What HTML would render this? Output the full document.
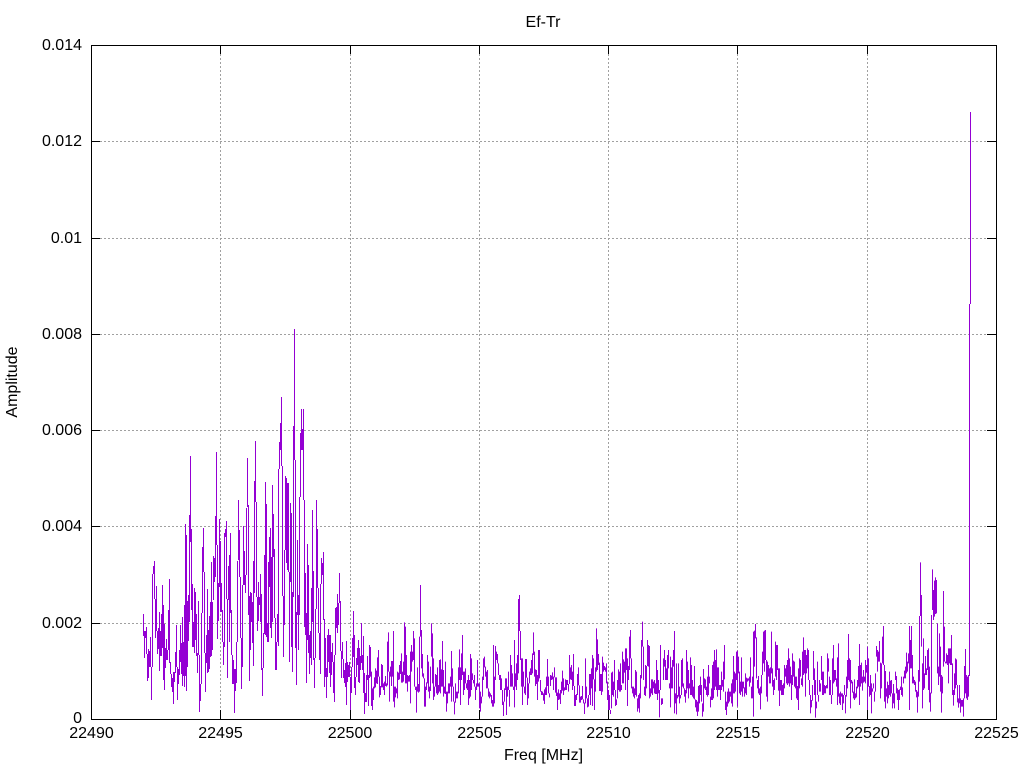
<!DOCTYPE html>
<html><head><meta charset="utf-8"><title>Ef-Tr</title>
<style>html,body{margin:0;padding:0;background:#fff}svg{display:block}text{font-family:"Liberation Sans",sans-serif;font-size:16px;fill:#000}</style>
</head><body>
<svg width="1024" height="768" viewBox="0 0 1024 768" xmlns="http://www.w3.org/2000/svg">
<rect width="1024" height="768" fill="#fff"/>
<g fill="none" stroke="#a0a0a0" stroke-width="1" stroke-dasharray="2 2" shape-rendering="crispEdges">
<path d="M100 141.5H987M100 238.5H987M100 334.5H987M100 430.5H987M100 526.5H987M100 623.5H987"/>
<path d="M220.5 54V710M350.5 54V710M479.5 54V710M608.5 54V710M737.5 54V710M867.5 54V710"/>
</g>
<g fill="none" stroke="#9400d3" stroke-width="1" shape-rendering="crispEdges">
<path d="M143.5 614V636M144.5 631V658M145.5 631V638M146.5 627V654M147.5 654V681M148.5 649V678M149.5 651V667M150.5 637V667M151.5 667V700M152.5 574V667M153.5 566V574M154.5 561V599M155.5 599V638M156.5 586V631M157.5 631V654M158.5 628V649M159.5 612V671M160.5 631V656M161.5 614V656M162.5 585V648M163.5 605V680M164.5 624V690M165.5 648V668M166.5 639V660M167.5 650V660M168.5 610V650M169.5 579V663M170.5 662V674M171.5 674V687M172.5 678V692M173.5 672V704M174.5 672V682M175.5 652V673M176.5 625V667M177.5 667V700M178.5 669V684M179.5 650V675M180.5 625V662M181.5 643V674M182.5 617V686M183.5 642V676M184.5 605V687M185.5 524V676M186.5 535V691M187.5 601V667M188.5 595V641M189.5 515V622M190.5 456V542M191.5 529V610M192.5 584V647M193.5 622V647M194.5 588V653M195.5 592V640M196.5 614V656M197.5 653V673M198.5 601V655M199.5 655V712M200.5 684V701M201.5 613V684M202.5 547V613M203.5 528V572M204.5 572V653M205.5 653V692M206.5 635V663M207.5 589V673M208.5 630V672M209.5 616V669M210.5 602V657M211.5 562V656M212.5 602V650M213.5 556V600M214.5 558V582M215.5 516V577M216.5 452V545M217.5 545V639M218.5 583V621M219.5 519V587M220.5 541V612M221.5 583V612M222.5 610V642M223.5 642V665M224.5 533V647M225.5 529V537M226.5 521V599M227.5 599V678M228.5 566V600M229.5 555V642M230.5 533V613M231.5 610V655M232.5 655V684M233.5 660V684M234.5 669V713M235.5 669V691M236.5 642V683M237.5 561V642M238.5 500V560M239.5 530V577M240.5 577V638M241.5 638V689M242.5 585V667M243.5 526V585M244.5 551V585M245.5 575V593M246.5 508V575M247.5 458V507M248.5 505V615M249.5 596V681"/>
<path d="M250.5 592V650M251.5 593V622M252.5 602V643M253.5 561V666M254.5 481V593M255.5 441V502M256.5 502V597M257.5 597V631M258.5 582V621M259.5 597V605M260.5 574V622M261.5 594V670M262.5 668V696M263.5 633V668M264.5 555V634M265.5 482V635M266.5 504V637M267.5 623V642M268.5 562V642M269.5 537V587M270.5 528V628M271.5 557V638M272.5 485V622M273.5 514V557M274.5 549V618M275.5 618V670M276.5 642V670M277.5 614V642M278.5 469V646M279.5 442V469M280.5 423V450M281.5 397V466M282.5 466V596M283.5 596V657M284.5 550V625M285.5 476V550M286.5 478V563M287.5 483V570M288.5 483V572M289.5 572V662M290.5 503V582M291.5 513V647M292.5 592V672M293.5 426V597M294.5 329V460M295.5 460V648M296.5 612V685M297.5 540V615M298.5 595V650M299.5 497V615M300.5 433V497M301.5 409V450M302.5 429V450M303.5 409V500M304.5 500V627M305.5 573V635M306.5 613V683M307.5 544V640M308.5 565V653M309.5 635V674M310.5 631V658M311.5 588V665M312.5 510V622M313.5 571V660M314.5 658V688M315.5 609V658M316.5 500V609M317.5 529V588M318.5 588V633M319.5 633V660M320.5 584V674M321.5 558V584M322.5 563V575M323.5 552V620M324.5 619V687M325.5 638V677M326.5 668V698M327.5 635V677M328.5 629V662M329.5 635V673M330.5 635V687M331.5 652V675M332.5 643V662M333.5 662V693M334.5 655V702M335.5 608V655M336.5 607V628M337.5 594V633M338.5 603V625M339.5 573V603M340.5 601V651M341.5 651V678M342.5 642V659M343.5 659V678M344.5 670V683M345.5 663V687M346.5 641V705M347.5 662V682M348.5 665V677M349.5 662V677M350.5 677V711M351.5 667V693M352.5 638V667M353.5 611V657M354.5 635V688M355.5 677V695M356.5 658V677M357.5 648V665M358.5 640V682M359.5 648V683M360.5 656V670M361.5 623V663M362.5 655V670M363.5 636V693M364.5 673V714M365.5 693V702M366.5 675V702M367.5 656V680M368.5 675V706M369.5 645V678"/>
</g>
<g transform="translate(0,580) scale(1,0.33333)" fill="none" stroke="#9400d3" stroke-width="1" shape-rendering="crispEdges">
<path d="M370.5 201V290M371.5 275V378M372.5 325V390M373.5 320V360M374.5 292V325M375.5 265V322M376.5 272V310M377.5 232V312M378.5 210V290M379.5 290V352M380.5 318V345M381.5 252V322M382.5 255V322M383.5 310V330M384.5 305V345M385.5 288V318M386.5 310V320M387.5 185V316M388.5 157V275M389.5 275V365M390.5 260V290M391.5 243V318M392.5 243V290M393.5 153V365M394.5 320V382M395.5 320V352M396.5 325V340M397.5 275V355M398.5 278V300M399.5 255V298M400.5 243V282M401.5 220V308M402.5 275V308M403.5 245V305M404.5 127V285M405.5 140V310M406.5 225V310M407.5 285V335M408.5 288V305M409.5 285V305M410.5 215V370M411.5 195V275M412.5 215V245M413.5 153V240M414.5 175V320M415.5 320V330M416.5 320V398M417.5 262V335M418.5 312V338M419.5 170V335M420.5 15V170M421.5 150V265M422.5 222V290M423.5 280V295M424.5 295V380M425.5 320V380M426.5 307V330M427.5 225V310M428.5 245V335M429.5 320V355M430.5 260V333M431.5 130V230M432.5 160V310M433.5 235V360M434.5 320V350M435.5 282V320M436.5 285V340M437.5 262V345M438.5 315V340M439.5 240V335M440.5 238V340M441.5 268V320M442.5 183V320M443.5 270V350M444.5 320V340M445.5 245V342M446.5 335V395M447.5 335V370M448.5 310V340M449.5 310V340M450.5 290V320M451.5 213V365M452.5 265V320M453.5 320V365M454.5 365V403M455.5 310V368M456.5 335V355M457.5 335V355M458.5 262V340M459.5 208V300M460.5 262V375M461.5 220V300M462.5 165V285M463.5 275V345M464.5 275V330M465.5 265V310M466.5 310V325M467.5 300V330M468.5 285V375M469.5 300V355M470.5 222V350M471.5 235V330M472.5 280V300M473.5 300V310M474.5 285V320M475.5 320V360M476.5 310V330M477.5 240V320M478.5 310V320M479.5 310V385M480.5 335V395M481.5 350V370M482.5 290V350M483.5 235V300M484.5 230V262M485.5 260V290M486.5 275V325M487.5 270V325M488.5 325V350M489.5 335V355M490.5 340V350M491.5 345V370M492.5 360V380M493.5 195V380M494.5 290V370M495.5 198V300M496.5 215V240M497.5 222V250M498.5 250V285M499.5 285V300M500.5 285V330M501.5 295V330M502.5 330V375M503.5 365V408M504.5 325V365M505.5 295V330M506.5 295V405M507.5 320V350M508.5 275V330M509.5 330V380M510.5 225V320M511.5 255V320M512.5 280V320M513.5 320V330M514.5 180V382M515.5 280V320M516.5 250V330M517.5 225V300M518.5 57V280M519.5 45V153M520.5 153V240M521.5 235V320M522.5 235V375M523.5 275V320M524.5 320V340M525.5 237V345M526.5 237V293M527.5 293V375M528.5 310V355M529.5 275V310"/>
<path d="M530.5 265V285M531.5 240V285M532.5 220V280M533.5 157V225M534.5 215V290M535.5 268V318M536.5 270V312M537.5 285V360M538.5 210V305M539.5 210V295M540.5 300V335M541.5 333V345M542.5 335V345M543.5 340V362M544.5 328V372M545.5 322V345M546.5 290V345M547.5 237V318M548.5 290V340M549.5 340V352M550.5 285V318M551.5 287V300M552.5 277V298M553.5 290V330M554.5 262V292M555.5 292V338M556.5 292V348M557.5 338V390M558.5 328V360M559.5 340V358M560.5 330V372M561.5 305V340M562.5 272V332M563.5 295V345M564.5 322V332M565.5 298V330M566.5 300V330M567.5 300V315M568.5 312V335M569.5 225V312M570.5 262V298M571.5 255V300M572.5 275V330M573.5 222V318M574.5 318V378M575.5 345V378M576.5 342V360M577.5 282V345M578.5 262V316M579.5 316V368M580.5 350V368M581.5 348V360M582.5 318V358M583.5 358V370M584.5 368V402M585.5 235V370M586.5 320V355M587.5 355V382M588.5 345V380M589.5 282V345M590.5 282V375M591.5 265V325M592.5 225V378M593.5 235V298M594.5 298V390M595.5 262V335M596.5 145V275M597.5 178V270M598.5 222V255M599.5 248V333M600.5 282V333M601.5 282V345M602.5 230V335M603.5 248V275M604.5 258V270M605.5 262V275M606.5 250V310M607.5 305V360M608.5 330V395M609.5 345V390M610.5 390V402M611.5 278V385M612.5 275V345M613.5 305V350M614.5 240V330M615.5 330V378M616.5 358V375M617.5 300V355M618.5 268V330M619.5 275V335M620.5 250V335M621.5 315V330M622.5 215V310M623.5 238V310M624.5 245V278M625.5 205V330M626.5 205V270M627.5 235V378M628.5 258V300M629.5 170V270M630.5 150V235M631.5 235V325M632.5 320V340M633.5 320V350M634.5 325V355M635.5 270V345M636.5 275V350M637.5 355V395M638.5 345V385M639.5 340V398M640.5 285V355M641.5 180V295M642.5 125V200M643.5 200V300M644.5 320V345M645.5 255V348M646.5 258V325M647.5 180V258M648.5 195V260M649.5 198V355M650.5 325V350M651.5 298V340M652.5 298V345M653.5 305V325M654.5 300V340M655.5 310V342M656.5 240V342M657.5 270V360M658.5 300V340M659.5 330V412M660.5 195V330M661.5 355V375M662.5 355V372M663.5 235V300M664.5 210V260M665.5 240V300M666.5 265V300M667.5 225V300M668.5 210V265M669.5 310V325M670.5 230V382M671.5 262V325M672.5 240V325M673.5 210V260M674.5 153V400M675.5 340V370M676.5 250V403M677.5 345V355M678.5 250V350M679.5 320V370M680.5 345V355M681.5 240V345M682.5 235V320M683.5 310V325M684.5 325V350M685.5 330V368M686.5 210V340M687.5 245V325M688.5 270V355M689.5 310V325"/>
<path d="M690.5 232V345M691.5 255V345M692.5 300V350M693.5 320V355M694.5 258V358M695.5 358V382M696.5 360V395M697.5 365V408M698.5 318V395M699.5 315V370M700.5 290V345M701.5 315V365M702.5 370V410M703.5 267V395M704.5 295V325M705.5 298V330M706.5 320V345M707.5 290V350M708.5 255V345M709.5 290V310M710.5 350V382M711.5 325V360M712.5 255V360M713.5 245V355M714.5 210V330M715.5 240V320M716.5 208V330M717.5 262V350M718.5 262V330M719.5 315V330M720.5 315V360M721.5 275V330M722.5 300V320M723.5 245V335M724.5 195V298M725.5 335V390M726.5 365V405M727.5 335V380M728.5 325V370M729.5 335V365M730.5 335V350M731.5 310V370M732.5 298V380M733.5 228V340M734.5 275V340M735.5 280V335M736.5 215V300M737.5 212V380M738.5 230V280M739.5 275V340M740.5 305V345M741.5 232V335M742.5 305V350M743.5 305V325M744.5 322V350M745.5 280V340M746.5 293V345M747.5 295V305M748.5 295V302M749.5 290V320M750.5 232V308M751.5 320V355M752.5 290V355M753.5 155V410M754.5 152V260M755.5 132V175M756.5 172V295M757.5 300V325M758.5 288V340M759.5 325V345M760.5 320V388M761.5 285V340M762.5 215V285M763.5 155V250M764.5 152V275M765.5 150V240M766.5 240V350M767.5 245V365M768.5 255V290M769.5 265V310M770.5 262V310M771.5 155V280M772.5 265V320M773.5 300V345M774.5 295V330M775.5 185V290M776.5 195V300M777.5 195V270M778.5 265V332M779.5 265V378M780.5 300V332M781.5 300V345M782.5 315V345M783.5 310V345M784.5 255V325M785.5 265V290M786.5 255V310M787.5 240V315M788.5 205V310M789.5 235V320M790.5 260V310M791.5 285V360M792.5 220V315M793.5 242V290M794.5 245V320M795.5 290V325M796.5 290V355M797.5 318V360M798.5 265V390M799.5 235V325M800.5 240V290M801.5 295V315M802.5 215V320M803.5 172V285M804.5 210V280M805.5 210V350M806.5 225V280M807.5 205V265M808.5 210V300M809.5 300V345M810.5 345V400M811.5 360V382M812.5 315V362M813.5 213V300M814.5 265V345M815.5 300V413M816.5 365V385M817.5 245V345M818.5 345V365M819.5 300V335M820.5 310V335M821.5 228V300M822.5 275V345M823.5 275V345M824.5 315V340M825.5 318V340M826.5 315V325M827.5 220V325M828.5 235V275M829.5 290V345M830.5 300V345M831.5 345V372M832.5 235V345M833.5 195V310M834.5 270V305M835.5 270V300M836.5 295V320M837.5 232V375M838.5 190V350M839.5 340V370M840.5 335V375M841.5 340V350M842.5 340V390M843.5 345V370M844.5 315V345M845.5 345V400M846.5 290V350M847.5 240V325M848.5 162V300M849.5 235V305"/>
</g>
<g transform="translate(0,540) scale(1,0.33333)" fill="none" stroke="#9400d3" stroke-width="1" shape-rendering="crispEdges">
<path d="M850.5 360V505M851.5 420V430M852.5 425V458M853.5 455V475M854.5 418V480M855.5 460V475M856.5 440V472M857.5 420V445M858.5 378V440M859.5 312V495M860.5 375V440M861.5 368V430M862.5 410V452M863.5 390V428M864.5 410V425M865.5 360V430M866.5 375V398M867.5 320V515M868.5 355V440M869.5 438V470M870.5 405V465M871.5 430V520M872.5 445V455M873.5 430V445M874.5 455V485M875.5 400V455M876.5 318V350M877.5 330V395M878.5 335V365M879.5 303V365M880.5 368V475M881.5 370V445M882.5 290V370M883.5 258V375M884.5 375V485M885.5 393V505M886.5 445V470M887.5 425V490M888.5 435V475M889.5 395V465M890.5 422V470M891.5 420V460M892.5 460V505M893.5 432V490M894.5 460V505M895.5 395V420M896.5 408V460M897.5 445V480M898.5 450V510M899.5 448V480M900.5 440V450M901.5 410V465M902.5 442V470M903.5 410V430M904.5 392V415M905.5 380V415M906.5 338V400M907.5 365V395M908.5 340V370M909.5 258V510M910.5 300V385M911.5 258V385M912.5 345V430M913.5 410V430M914.5 420V435M915.5 425V455M916.5 450V472M917.5 455V518M918.5 390V470M919.5 228V425M920.5 67V228M921.5 165V320M922.5 370V505M923.5 295V450M924.5 400V445M925.5 348V405M926.5 385V405M927.5 330V390M928.5 325V450M929.5 380V487M930.5 458V515M931.5 225V460M932.5 88V210M933.5 150V240M934.5 122V230M935.5 112V222M936.5 120V220M937.5 250V400M938.5 380V435M939.5 280V410M940.5 320V455M941.5 405V518M942.5 410V460M943.5 153V380M944.5 260V365M945.5 365V370M946.5 340V370M947.5 345V375M948.5 325V430M949.5 325V370M950.5 325V375M951.5 285V375M952.5 370V465M953.5 450V497M954.5 400V465M955.5 355V445M956.5 358V435M957.5 435V487M958.5 475V503M959.5 435V490M960.5 475V518M961.5 480V500M962.5 480V500M963.5 475V530M964.5 378V475M965.5 327V460M966.5 405V475M967.5 410V480M968.5 405V470"/>
</g>
<path d="M969.5 304V676M970.5 112V304" fill="none" stroke="#9400d3" stroke-width="1" shape-rendering="crispEdges"/>
<g fill="none" stroke="#000" stroke-width="1" shape-rendering="crispEdges">
<path d="M91.5 45.5H996.5V719.5H91.5Z"/>
<path d="M91 141.5H100M91 238.5H100M91 334.5H100M91 430.5H100M91 526.5H100M91 623.5H100M987 141.5H996M987 238.5H996M987 334.5H996M987 430.5H996M987 526.5H996M987 623.5H996"/>
<path d="M220.5 45V54M350.5 45V54M479.5 45V54M608.5 45V54M737.5 45V54M867.5 45V54M220.5 710V719M350.5 710V719M479.5 710V719M608.5 710V719M737.5 710V719M867.5 710V719"/>
</g>
<g text-anchor="end">
<text x="82" y="50">0.014</text>
<text x="82" y="146">0.012</text>
<text x="82" y="243">0.01</text>
<text x="82" y="339">0.008</text>
<text x="82" y="435">0.006</text>
<text x="82" y="531">0.004</text>
<text x="82" y="628">0.002</text>
<text x="82" y="723">0</text>
</g>
<g text-anchor="middle">
<text x="91.5" y="738">22490</text>
<text x="220.5" y="738">22495</text>
<text x="350" y="738">22500</text>
<text x="479.5" y="738">22505</text>
<text x="608.5" y="738">22510</text>
<text x="738" y="738">22515</text>
<text x="867.5" y="738">22520</text>
<text x="996.5" y="738">22525</text>
<text x="543" y="27">Ef-Tr</text>
<text x="543.5" y="760">Freq [MHz]</text>
<text transform="translate(17,382) rotate(-90)" x="0" y="0">Amplitude</text>
</g>
</svg>
</body></html>
